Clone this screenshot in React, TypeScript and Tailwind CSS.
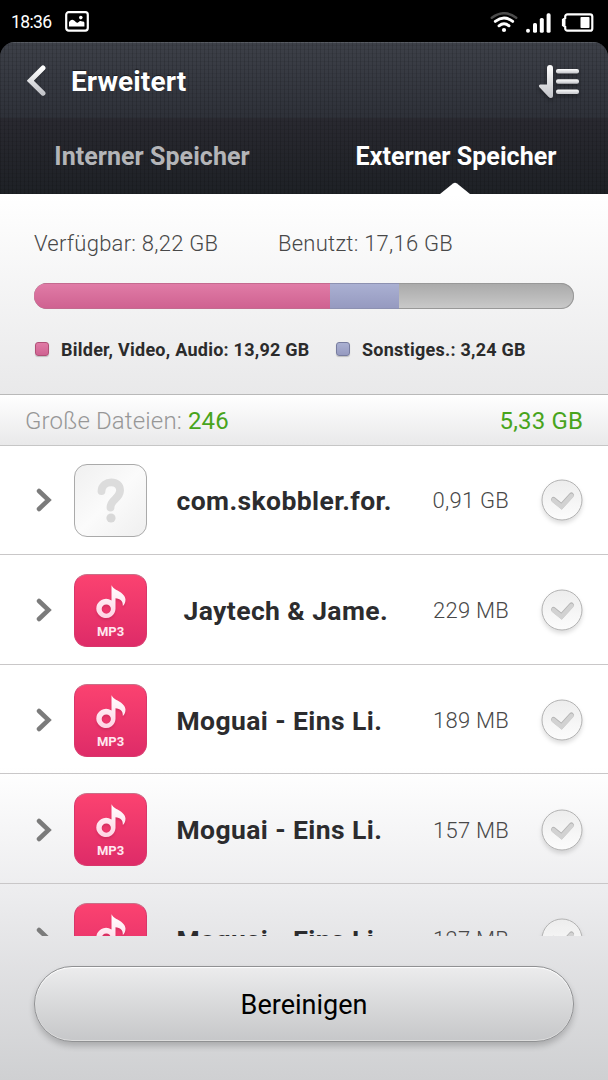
import React from 'react';

type LargeFile = {
  id: number;
  name: string;
  size: string;
  kind: 'unknown' | 'mp3';
};

const files: LargeFile[] = [
  { id: 1, name: 'com.skobbler.for.', size: '0,91 GB', kind: 'unknown' },
  { id: 2, name: ' Jaytech & Jame.', size: '229 MB', kind: 'mp3' },
  { id: 3, name: 'Moguai - Eins Li.', size: '189 MB', kind: 'mp3' },
  { id: 4, name: 'Moguai - Eins Li.', size: '157 MB', kind: 'mp3' },
  { id: 5, name: 'Moguai - Eins Li.', size: '127 MB', kind: 'mp3' },
];

function StatusBar() {
  return (
    <div className="flex h-[42px] shrink-0 items-center bg-black pl-[11px] pr-[14px] text-white">
      <span className="mt-[4px] w-[54px] text-[17.5px] leading-none tracking-[-0.6px]">18:36</span>
      <svg width="24" height="21" viewBox="0 0 24 21">
        <rect x="1.2" y="1.2" width="21.6" height="18.4" rx="2.5" fill="none" stroke="white" strokeWidth="2.2" />
        <path d="M4 15.500v-4.200C5.500 8 8.500 7.500 11 11.300c1.500 1.200 2.300-.2 3.300-.8 1.500-1.100 2.300.4 3.500 0 .9-.4 1.600.6 1.600 1.500v3.500z" fill="white" />
        <circle cx="15.8" cy="6.6" r="1.8" fill="white" />
      </svg>
      <div className="mt-[3px] ml-auto flex items-center">
        <svg className="mr-2" width="28" height="21" viewBox="0 0 28 21" fill="none" strokeLinecap="round">
          <path d="M1.8 5.800Q14-3.300 26.200 5.800" stroke="#4c4c4c" strokeWidth="2.5" />
          <path d="M5.300 9.400Q14 2.700 22.700 9.400" stroke="white" strokeWidth="2.9" />
          <path d="M9 13.800Q14 9.600 19 13.800" stroke="white" strokeWidth="2.9" />
          <circle cx="14" cy="18" r="2.1" fill="white" />
        </svg>
        <svg className="mr-[10px]" width="25" height="20" viewBox="0 0 25 20" fill="white">
          <circle cx="2" cy="17.8" r="2" />
          <rect x="7" y="10" width="4" height="9.8" rx="1.6" />
          <rect x="13.8" y="5" width="4" height="14.8" rx="1.6" />
          <rect x="20.6" y="0.3" width="4" height="19.5" rx="1.6" />
        </svg>
        <svg width="33" height="19" viewBox="0 0 33 19" fill="none">
          <path d="M6.500 1.300h22.500a2.300 2.300 0 0 1 2.300 2.300v11.800a2.300 2.300 0 0 1-2.300 2.300H6.500a2.300 2.300 0 0 1-2.300-2.300v-1.500L2 12.200V6.800l2.200-1.700V3.600a2.300 2.300 0 0 1 2.300-2.300z" stroke="white" strokeWidth="2.2" />
          <path d="M1 6.500h3.500v6H1z" fill="white" />
          <rect x="19.5" y="4" width="9" height="11" rx="0.8" fill="white" />
        </svg>
      </div>
    </div>
  );
}

function Header() {
  return (
    <div className="shrink-0 bg-black">
      <header className="relative overflow-hidden rounded-t-[15px] bg-[#292b31]">
        <div className="flex h-[76px] items-center border-t border-[#565a61] bg-linear-to-b from-[#3d4048] to-[#2e3139] pl-[27px] pr-[28px]">
          <svg className="relative z-10" width="20" height="32" viewBox="0 0 20 32">
            <defs>
              <linearGradient id="steel" x1="0" y1="0" x2="0" y2="1">
                <stop offset="0" stopColor="#fff" />
                <stop offset="1" stopColor="#c3c4c9" />
              </linearGradient>
            </defs>
            <path d="M16.500 4L4 16.500 16.500 29" fill="none" stroke="#15171b" strokeWidth="4.5" strokeLinecap="round" opacity="0.5" />
            <path d="M16 3L3.300 15.800 16 28.200" fill="none" stroke="url(#steel)" strokeWidth="5" strokeLinecap="round" />
          </svg>
          <h1 className="relative z-10 ml-6 mt-[2px] text-[28px] leading-none font-bold tracking-[0.1px] text-white [text-shadow:0_-1px_1px_#0008]">Erweitert</h1>
          <svg className="relative z-10 ml-auto mt-[3px] drop-shadow-[0_2px_2px_#0006]" width="42" height="34" viewBox="0 0 42 34" fill="url(#steel)">
            <path d="M9 3a3 3 0 0 1 6 0v28q0 2-2 2-1.500 0-2.600-1.200L1.200 22Q.2 20 2 19.500h7z" />
            <rect x="18" y="4" width="23" height="4.5" rx="2" />
            <rect x="18" y="14.2" width="23" height="4.5" rx="2" />
            <rect x="18" y="24.5" width="23" height="4.5" rx="2" />
          </svg>
        </div>
        <nav className="grid h-[76px] grid-cols-2 items-center bg-linear-to-b from-[#292930] to-[#1e2126] pt-px text-center text-[25px] leading-none font-bold tracking-[0.05px]">
          <span className="relative z-10 text-[#b4b5b8]">Interner Speicher</span>
          <span className="relative z-10 text-white">Externer Speicher</span>
        </nav>
        <div className="pointer-events-none absolute inset-0 bg-[repeating-linear-gradient(90deg,#0002_0_1px,transparent_1px_4px),repeating-linear-gradient(0deg,#0001_0_1px,transparent_1px_4px)]" />
        <svg className="absolute bottom-0 left-[440px] z-10" width="30" height="12" viewBox="0 0 30 12">
          <path d="M0 12L13 1.500Q15 0 17 1.500L30 12z" fill="white" />
        </svg>
      </header>
    </div>
  );
}

function StorageSummary() {
  return (
    <section className="flex h-[200px] shrink-0 flex-col bg-linear-to-b from-white to-[#e9e9ea] pt-[39px] pr-[34px] pl-[34px]">
      <div className="flex text-[22px] leading-[22px] font-light tracking-[0.25px] text-[#484848]">
        <span className="w-[244px]">Verfügbar: 8,22 GB</span>
        <span>Benutzt: 17,16 GB</span>
      </div>
      <div className="mt-7 flex h-[26px] overflow-hidden rounded-full bg-linear-to-b from-[#a9a9a9] to-[#cacaca] shadow-[inset_0_0_0_1px_#989898]">
        <div className="w-[296px] shrink-0 border-y border-[#c46a8f] bg-linear-to-b from-[#e07ba6] to-[#cf6291]" />
        <div className="w-[69px] shrink-0 border-y border-[#8d91b1] bg-linear-to-b from-[#aab0d2] to-[#969ac0]" />
      </div>
      <div className="mt-8 flex items-center text-[18px] leading-[18px] font-bold tracking-[0.25px] text-[#2b2b2b]">
        <i className="mt-[-2px] mr-3 ml-px size-[14px] rounded-[3px] border border-[#b15077] bg-linear-to-b from-[#e07ba6] to-[#cf6291] shadow-[0_1px_1px_#0003]" />
        <span className="w-[275px]">Bilder, Video, Audio: 13,92 GB</span>
        <i className="mt-[-2px] mr-3 size-[14px] rounded-[3px] border border-[#777c9f] bg-linear-to-b from-[#aab0d2] to-[#969ac0] shadow-[0_1px_1px_#0003]" />
        <span>Sonstiges.: 3,24 GB</span>
      </div>
    </section>
  );
}

function FileIcon({ kind }: { kind: LargeFile['kind'] }) {
  if (kind === 'unknown') {
    return (
      <div className="flex size-[73px] items-center justify-center rounded-[13px] border border-[#aaa] bg-linear-to-br from-[#f0f0f0] via-[#fbfbfb] to-[#efefef]">
        <svg width="32" height="46" viewBox="0 0 32 46">
          <path d="M6.500 14C7 2.500 26 2.500 25 14c-.5 8-9.500 8.500-9.500 16.500" fill="none" stroke="#dcdcdc" strokeWidth="7.8" strokeLinecap="round" />
          <circle cx="16" cy="41" r="4.6" fill="#d8d8d8" />
        </svg>
      </div>
    );
  }
  return (
    <div className="flex size-[73px] flex-col items-center rounded-[13px] border border-[#d8366a] border-t-[#c96f87] bg-linear-to-b from-[#fb4270] to-[#de2b68] pt-[9px]">
      <svg className="drop-shadow-[0_2px_1px_#b01f4c66]" width="30" height="36" viewBox="0 0 30 36">
        <defs>
          <linearGradient id="note" x1="0" y1="0" x2="0" y2="1">
            <stop offset="0" stopColor="#fff" />
            <stop offset="1" stopColor="#ffd3e3" />
          </linearGradient>
        </defs>
        <path fillRule="evenodd" fill="url(#note)" d="M15.500 1c1.500 5.500 13.500 6.500 14 14.500 0 3-1.200 5.500-2.700 6.500.3-5-2.300-7.300-7.300-7.800V25A9.600 9.600 0 1 1 15.500 16.600zM10.300 20.500a4.600 4.600 0 1 0 0 9.200 4.600 4.600 0 0 0 0-9.200z" />
      </svg>
      <span className="mt-[5px] text-[13px] leading-none font-bold text-[#ffe8f0]">MP3</span>
    </div>
  );
}

function CheckCircle() {
  return (
    <svg width="54" height="54" viewBox="0 0 54 54">
      <defs>
        <linearGradient id="disc" x1="0" y1="0" x2="0" y2="1">
          <stop offset="0" stopColor="#ededed" />
          <stop offset="1" stopColor="#fcfcfc" />
        </linearGradient>
      </defs>
      <circle cx="27" cy="27" r="20" fill="url(#disc)" stroke="#b2b2b2" className="drop-shadow-[0_3px_2px_#0002]" />
      <path d="M18.500 26.500l8 6.500L36.500 22" fill="none" stroke="#b4b4b4" strokeWidth="5" strokeLinecap="round" />
      <path d="M18.500 27.200l8 6.500L36.500 22.800" fill="none" stroke="#d2d2d2" strokeWidth="4.4" strokeLinecap="round" />
    </svg>
  );
}

function FileRow({ file }: { file: LargeFile }) {
  return (
    <div className="flex h-[109.7px] shrink-0 items-center border-b border-[#c9c7c8] pt-[2px] pr-[19px] pl-[36px] first:h-[109px] first:pt-0">
      <svg width="17" height="24" viewBox="0 0 17 24" className="mr-[21px] shrink-0">
        <path d="M3 3l9.500 9L3 21" fill="none" stroke="#7b7b7b" strokeWidth="4.5" strokeLinecap="round" />
      </svg>
      <FileIcon kind={file.kind} />
      <span className="ml-[29.5px] pt-[2px] text-[26.5px] leading-none font-bold tracking-[0.4px] whitespace-pre text-[#2c2c2e]">{file.name}</span>
      <span className="ml-auto mr-[26px] pt-[2px] text-[22px] leading-none font-light tracking-[0.25px] text-[#484848]">{file.size}</span>
      <CheckCircle />
    </div>
  );
}

export default function App() {
  return (
    <div className="flex h-[1080px] w-[608px] flex-col overflow-hidden bg-linear-to-b from-white from-[71%] via-[#ececee] via-[83%] to-[#cfd0d2] font-['Roboto','Liberation_Sans',sans-serif]">
      <StatusBar />
      <Header />
      <StorageSummary />
      <div className="flex h-[52px] shrink-0 items-center justify-between border-y border-t-[#b9b9b9] border-b-[#c6c6c6] bg-linear-to-b from-white to-[#e9e9ea] px-[25px] pt-[2px] text-[24px] leading-none font-light tracking-[0.15px] text-[#979797]">
        <span>
          Große Dateien: <span className="font-normal text-[#48a41c]">246</span>
        </span>
        <span className="font-normal text-[#48a41c]">5,33 GB</span>
      </div>
      <div className="h-[490px] shrink-0 overflow-hidden">
        {files.map((file) => (
          <FileRow key={file.id} file={file} />
        ))}
      </div>
      <footer className="flex-1 px-[34px] pt-[30px]">
        <button className="flex h-[76px] w-full items-center justify-center rounded-full border border-[#909193] bg-linear-to-b from-[#ececed] to-[#c6c7c9] pt-[2px] text-[27px] leading-none text-black shadow-[inset_0_1px_1px_#fff,inset_0_-1px_0_#ddd,0_4px_6px_#0003]">
          Bereinigen
        </button>
      </footer>
    </div>
  );
}
